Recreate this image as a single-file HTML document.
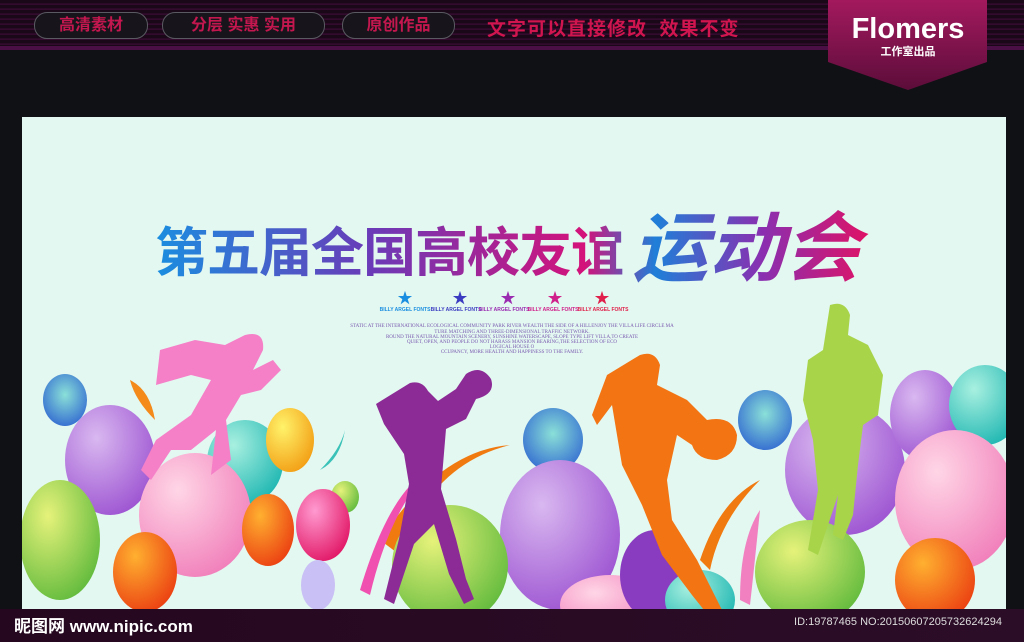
<!DOCTYPE html>
<html><head><meta charset="utf-8"><style>
html,body{margin:0;padding:0;width:1024px;height:642px;overflow:hidden;background:#101115;font-family:"Liberation Sans","Noto Sans CJK SC",sans-serif}
.hdr{position:absolute;left:0;top:0;width:1024px;height:50px;background:repeating-linear-gradient(180deg,#1a0718 0,#1a0718 3px,#3b0c37 4px,#2a0927 5px);}
.hdr:after{content:"";position:absolute;left:0;right:0;bottom:0;height:4px;background:#4a1045}
.pill{position:absolute;top:12px;height:25px;border:1px solid #5a5a62;border-radius:13px;background:#17151b;color:#c4174f;font-size:16px;line-height:25px;text-align:center;font-weight:bold}
.red{position:absolute;left:487px;top:14px;color:#d0154f;font-size:19px;font-weight:bold;letter-spacing:1px}
.bot{position:absolute;left:0;top:609px;width:1024px;height:33px;background:linear-gradient(90deg,#25081f,#2c0d28)}
</style></head><body>
<div class="hdr"></div>
<div class="pill" style="left:34px;width:112px">高清素材</div>
<div class="pill" style="left:162px;width:161px">分层 实惠 实用</div>
<div class="pill" style="left:342px;width:111px">原创作品</div>
<div class="red">文字可以直接修改&nbsp;&nbsp;效果不变</div>
<svg style="position:absolute;left:0;top:0" width="1024" height="642">
<defs>
<linearGradient id="bd" x1="0" y1="0" x2="0" y2="1"><stop offset="0" stop-color="#a3195e"/><stop offset="1" stop-color="#5c0d3a"/></linearGradient>
<linearGradient id="tg" x1="155" y1="0" x2="870" y2="0" gradientUnits="userSpaceOnUse"><stop offset="0" stop-color="#1a8ee0"/><stop offset="0.3" stop-color="#6a3bb8"/><stop offset="0.6" stop-color="#d4127a"/><stop offset="0.7" stop-color="#1f7fd8"/><stop offset="0.85" stop-color="#8a2fb0"/><stop offset="1" stop-color="#e01265"/></linearGradient>
<radialGradient id="g" cx=".35" cy=".3" r=".8"><stop offset="0" stop-color="#e6f27a"/><stop offset="1" stop-color="#5bb83a"/></radialGradient>
<radialGradient id="p" cx=".35" cy=".3" r=".8"><stop offset="0" stop-color="#d9b8f0"/><stop offset="1" stop-color="#9a4fd0"/></radialGradient>
<radialGradient id="k" cx=".35" cy=".3" r=".8"><stop offset="0" stop-color="#ffd6e6"/><stop offset="1" stop-color="#f07ab8"/></radialGradient>
<radialGradient id="t" cx=".35" cy=".3" r=".8"><stop offset="0" stop-color="#a8f0e0"/><stop offset="1" stop-color="#19b4b0"/></radialGradient>
<radialGradient id="y" cx=".35" cy=".3" r=".8"><stop offset="0" stop-color="#fff36a"/><stop offset="1" stop-color="#f29a10"/></radialGradient>
<radialGradient id="o" cx=".35" cy=".3" r=".8"><stop offset="0" stop-color="#ffb030"/><stop offset="1" stop-color="#ea3a10"/></radialGradient>
<radialGradient id="r" cx=".35" cy=".3" r=".8"><stop offset="0" stop-color="#ff9ad0"/><stop offset="1" stop-color="#e01060"/></radialGradient>
<radialGradient id="b" cx=".5" cy=".4" r=".7"><stop offset="0" stop-color="#8ae0d8"/><stop offset="1" stop-color="#2a5fd0"/></radialGradient>
<clipPath id="cp"><rect x="22" y="117" width="984" height="492"/></clipPath>
</defs>
<path d="M828 0H987V62L908 90L828 62Z" fill="url(#bd)"/>
<text x="908" y="38" fill="#fff" font-size="29" font-weight="bold" text-anchor="middle" font-family="Liberation Sans">Flomers</text>
<text x="908" y="55" fill="#fff" font-size="11" font-weight="bold" text-anchor="middle">工作室出品</text>
<rect x="22" y="117" width="984" height="492" fill="#e3f8f1"/>
<g clip-path="url(#cp)">
<path d="M130 380q20 10 25 40q-20-20-25-40z" fill="#f38a1a"/>
<path d="M320 470q20-20 25-40q-5 30-25 40z" fill="#3ac2b8"/>
<path d="M380 540q60-90 130-95q-80 20-110 110z" fill="#f07a10"/>
<path d="M360 590q30-100 70-120q-40 40-60 125z" fill="#f050b0"/>
<path d="M700 560q20-60 60-80q-40 40-50 90z" fill="#f07a10"/>
<path d="M740 600q0-60 20-90q-5 50-10 95z" fill="#f080c0"/>
<ellipse cx="110" cy="460" rx="45" ry="55" fill="url(#p)"/>
<ellipse cx="65" cy="400" rx="22" ry="26" fill="url(#b)"/>
<ellipse cx="60" cy="540" rx="40" ry="60" fill="url(#g)"/>
<ellipse cx="245" cy="462" rx="38" ry="42" fill="url(#t)"/>
<ellipse cx="290" cy="440" rx="24" ry="32" fill="url(#y)"/>
<ellipse cx="195" cy="515" rx="56" ry="62" fill="url(#k)"/>
<ellipse cx="268" cy="530" rx="26" ry="36" fill="url(#o)"/>
<ellipse cx="345" cy="497" rx="14" ry="16" fill="url(#g)"/>
<ellipse cx="323" cy="525" rx="27" ry="36" fill="url(#r)"/>
<ellipse cx="145" cy="572" rx="32" ry="40" fill="url(#o)"/>
<ellipse cx="318" cy="585" rx="17" ry="25" fill="#c9c0f5"/>
<ellipse cx="553" cy="440" rx="30" ry="32" fill="url(#b)"/>
<ellipse cx="560" cy="535" rx="60" ry="75" fill="url(#p)"/>
<ellipse cx="450" cy="565" rx="58" ry="60" fill="url(#g)"/>
<ellipse cx="610" cy="605" rx="50" ry="30" fill="url(#k)"/>
<ellipse cx="655" cy="575" rx="35" ry="45" fill="#8a3cc0"/>
<ellipse cx="700" cy="600" rx="35" ry="30" fill="url(#t)"/>
<ellipse cx="765" cy="420" rx="27" ry="30" fill="url(#b)"/>
<ellipse cx="845" cy="470" rx="60" ry="65" fill="url(#p)"/>
<ellipse cx="810" cy="572" rx="55" ry="52" fill="url(#g)"/>
<ellipse cx="925" cy="415" rx="35" ry="45" fill="url(#p)"/>
<ellipse cx="985" cy="405" rx="36" ry="40" fill="url(#t)"/>
<ellipse cx="955" cy="500" rx="60" ry="70" fill="url(#k)"/>
<ellipse cx="935" cy="580" rx="40" ry="42" fill="url(#o)"/>
<path d="M160 350l35-10l30 5l20-10q20-5 18 15l-10 20l20-10l8 10l-20 20l-20 5l-15 25l5 40l-20 15l5-45l-25 20l-20 0l-20 30l-10-10l15-30l35-25l20-35l-20-5l-35 10z" fill="#f580c8"/>
<path d="M410 383q12-3 18 8l10 10l18-12l10-15q15-10 25 5q5 15-15 20l-10 20l-20 10l-5 60l15 50l10 40l8 20l-10 5l-15-30l-15-50l-20 20l-20 60l-10-5l15-60l10-55l-5-30l-20-30l-8-20z" fill="#8c2a96"/>
<path d="M640 355q15-5 20 10l-3 20l30 15l20 20q25-5 30 15q0 20-20 25q-20 0-25-15l-15-10l-10 45l5 40l25 40l15 30l10 20l-10 10l-20-25l-30-40l-20-50l-20-40l-10-60l-15 20l-5-10l15-40z" fill="#f37413"/>
<path d="M830 305q15-5 20 10l-2 20l20 10l15 30l-5 40l-15 10l-5 40l-5 50l-10 25l-10-5l5-40l-10 30l-10 30l-10-5l10-60l-5-50l-10-40l5-40l15-10z" fill="#a8d44a"/>
</g>
<text x="155" y="271" font-size="53" font-weight="bold" fill="url(#tg)" font-family="Noto Sans CJK SC,sans-serif" letter-spacing="-1">第五届全国高校友谊</text>
<text x="632" y="275" font-size="76" font-weight="bold" fill="url(#tg)" font-family="Noto Sans CJK SC,sans-serif" font-style="italic">运动会</text>
<g font-size="15" text-anchor="middle">
<text x="405" y="303" fill="#1a8ee0">★</text>
<text x="460" y="303" fill="#3a3bc0">★</text>
<text x="508" y="303" fill="#9a2bb0">★</text>
<text x="555" y="303" fill="#d0208a">★</text>
<text x="602" y="303" fill="#e0204a">★</text>
</g>
<g font-size="5" font-weight="bold" text-anchor="middle">
<text x="405" y="311" fill="#1a8ee0">BILLY ARGEL FONTS</text>
<text x="456" y="311" fill="#3a3bc0">BILLY ARGEL FONTS</text>
<text x="504" y="311" fill="#9a2bb0">BILLY ARGEL FONTS</text>
<text x="553" y="311" fill="#d0208a">BILLY ARGEL FONTS</text>
<text x="603" y="311" fill="#e0204a">BILLY ARGEL FONTS</text>
</g>
<g font-size="5" fill="#7a5ab0" text-anchor="middle" font-family="Liberation Serif">
<text x="512" y="327">STATIC AT THE INTERNATIONAL ECOLOGICAL COMMUNITY PARK RIVER WEALTH THE SIDE OF A HILLENJOY THE VILLA LIFE CIRCLE MA</text>
<text x="512" y="333">TURE MATCHING AND THREE-DIMENSIONAL TRAFFIC NETWORK.</text>
<text x="512" y="338">ROUND THE NATURAL MOUNTAIN SCENERY, SUNSHINE WATERSCAPE, SLOPE TYPE LIFT VILLA,TO CREATE</text>
<text x="512" y="343">QUIET, OPEN, AND PEOPLE DO NOT HARASS MANSION BEARING,THE SELECTION OF ECO</text>
<text x="512" y="348">LOGICAL HOUSE O</text>
<text x="512" y="353">CCUPANCY, MORE HEALTH AND HAPPINESS TO THE FAMILY.</text>
</g>
</svg>
<div class="bot"></div>
<div style="position:absolute;left:14px;top:612px;color:#fff;font-size:17px;font-weight:bold">昵图网 www.nipic.com</div>
<div style="position:absolute;right:22px;top:616px;color:#ddd;font-size:11px">ID:19787465 NO:20150607205732624294</div>
</body></html>
